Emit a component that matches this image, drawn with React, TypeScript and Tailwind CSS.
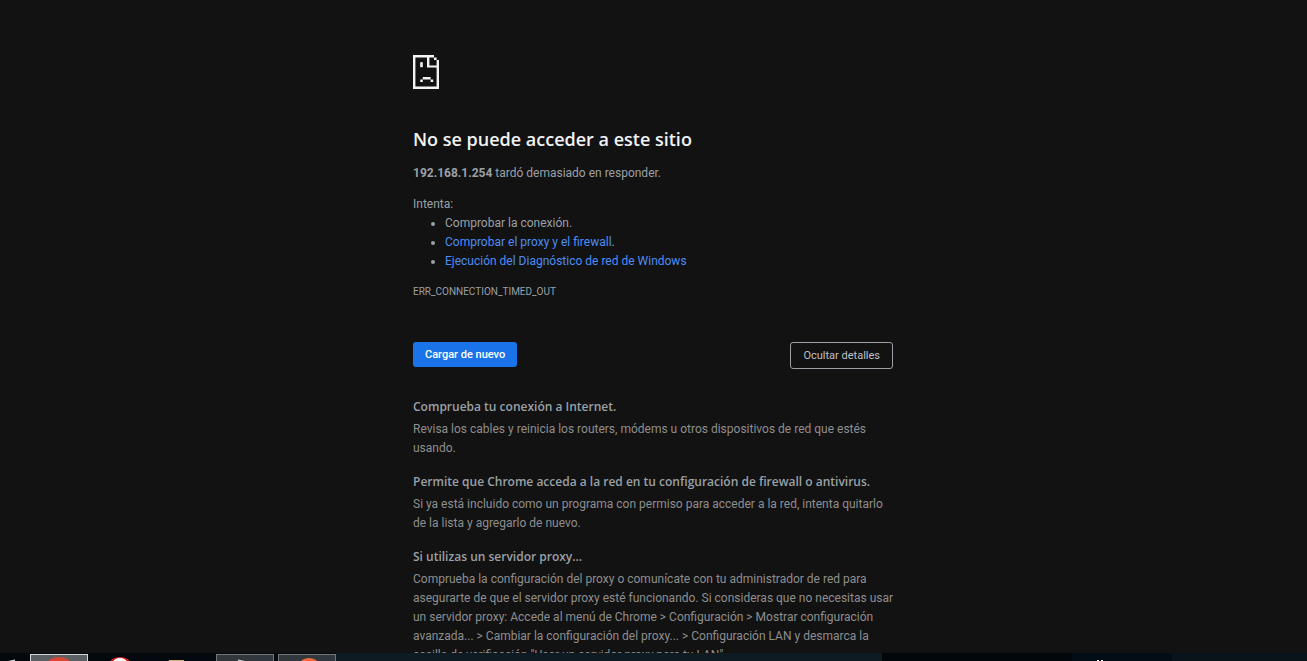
import type { ReactNode } from "react"

interface Tip {
  title: string
  body: ReactNode
}

const tips: Tip[] = [
  {
    title: "Comprueba tu conexión a Internet.",
    body: "Revisa los cables y reinicia los routers, módems u otros dispositivos de red que estés usando.",
  },
  {
    title: "Permite que Chrome acceda a la red en tu configuración de firewall o antivirus.",
    body: "Si ya está incluido como un programa con permiso para acceder a la red, intenta quitarlo de la lista y agregarlo de nuevo.",
  },
  {
    title: "Si utilizas un servidor proxy...",
    body: (
      <span className="sm:whitespace-nowrap">
        Comprueba la configuración del proxy o comunícate con tu administrador de red para
        <br className="max-sm:hidden" /> asegurarte de que el servidor proxy esté funcionando. Si consideras que no necesitas usar
        <br className="max-sm:hidden" /> un servidor proxy: Accede al menú de Chrome &gt; Configuración &gt; Mostrar configuración
        <br className="max-sm:hidden" /> avanzada... &gt; Cambiar la configuración del proxy... &gt; Configuración LAN y desmarca la
        <br className="max-sm:hidden" /> casilla de verificación "Usar un servidor proxy para tu LAN".
      </span>
    ),
  },
]

function SadPageIcon() {
  return (
    <svg className="block h-[34px] w-[26px]" viewBox="0 0 26 34" fill="#f1f3f4" aria-hidden="true">
      <path d="M0 0H21V2.4H16.4V10.4H26V34H0ZM2.4 2.4V31.6H23.6V12.6H14V2.4Z" fillRule="evenodd" />
      <path d="M21 2.4h2.6V5H21zM23.6 5H26v6h-2.4z" />
      <path d="M7.2 7.2h2.6v5H7.2z" />
      <path d="M9.8 22h7.8v2.4H9.8zM7.2 24.4h2.6V27H7.2zM17.6 24.4h2.6V27h-2.6z" />
    </svg>
  )
}

// Only the top edge of the taskbar is visible
function Taskbar() {
  return (
    <footer className="flex h-2 shrink-0 overflow-hidden bg-[#0e1b23]">
      <svg className="h-2 w-[336px] shrink-0" viewBox="0 0 336 8" aria-hidden="true">
        <rect width="336" height="8" fill="#03090e" />
        <path d="M8 8 15 6.5V8z" fill="#d5d8da" />
        <rect x="30.5" y="1.5" width="57" height="9" fill="#5b6064" stroke="#d6d8d9" />
        <ellipse cx="59" cy="10" rx="11" ry="6" fill="#dc4437" />
        <ellipse cx="120" cy="10" rx="10" ry="6" fill="#e0242b" />
        <ellipse cx="120" cy="10" rx="7" ry="5" fill="#fff" />
        <rect x="169" y="7" width="15" height="1" fill="#d8b566" />
        <rect x="216.5" y="1.5" width="57" height="9" fill="#30383d" stroke="#70777a" />
        <path d="M238 8V6.5L245 8z" fill="#d5d8da" />
        <rect x="278.5" y="1.5" width="57" height="9" fill="#30383d" stroke="#70777a" />
        <ellipse cx="309" cy="11" rx="9" ry="6" fill="#f06a3c" />
      </svg>
      <div className="flex-1" />
      <svg className="h-2 w-[425px] shrink-0" viewBox="0 0 425 8" aria-hidden="true">
        <rect width="425" height="8" fill="#02070c" />
        <rect x="190" width="100" height="8" fill="#030d16" />
        <rect x="290" width="135" height="8" fill="#08141a" />
        <path d="M215 7h2v1h-2zM219 7h2v1h-2z" fill="#fff" />
      </svg>
    </footer>
  )
}

export default function App() {
  return (
    <div className="flex h-screen flex-col bg-[#121212] font-[Roboto,'Noto_Sans',sans-serif] text-[12px] leading-[19px] text-[#9aa0a6]">
      <main className="min-h-0 flex-1 overflow-hidden pr-px">
        <div className="mx-auto w-full max-w-[480px] pt-[55px]">
          <SadPageIcon />
          <h1 className="mt-[38px] font-['Open_Sans','Noto_Sans',sans-serif] text-[18px] leading-6 font-semibold text-[#f1f3f4]">
            No se puede acceder a este sitio
          </h1>
          <p className="mt-[13px]">
            <strong className="font-bold">192.168.1.254</strong> tardó demasiado en responder.
          </p>

          <p className="mt-3">Intenta:</p>
          <ul className="list-disc pl-8">
            <li>Comprobar la conexión.</li>
            <li>
              <a href="#proxy" className="text-[#4c8df6]">Comprobar el proxy y el firewall</a>.
            </li>
            <li>
              <a href="#diagnostico" className="text-[#4c8df6]">Ejecución del Diagnóstico de red de Windows</a>
            </li>
          </ul>

          <div className="mt-[13px] text-[10px] leading-4">ERR_CONNECTION_TIMED_OUT</div>

          <div className="mt-[42px] flex items-start justify-between text-[11px] leading-[25px]">
            <button type="button" className="rounded-[3px] bg-[#1a73e8] px-3 font-medium text-white">
              Cargar de nuevo
            </button>
            <button type="button" className="rounded-[3px] border border-[#9aa0a6] px-3 text-[#bdc1c6]">
              Ocultar detalles
            </button>
          </div>

          <section className="mt-7 space-y-[14px]">
            {tips.map(tip => (
              <div key={tip.title}>
                <h2 className="font-['Open_Sans','Noto_Sans',sans-serif] font-semibold">{tip.title}</h2>
                <p className="mt-1 text-[#8e8e8e]">{tip.body}</p>
              </div>
            ))}
          </section>
        </div>
      </main>
      <Taskbar />
    </div>
  )
}
